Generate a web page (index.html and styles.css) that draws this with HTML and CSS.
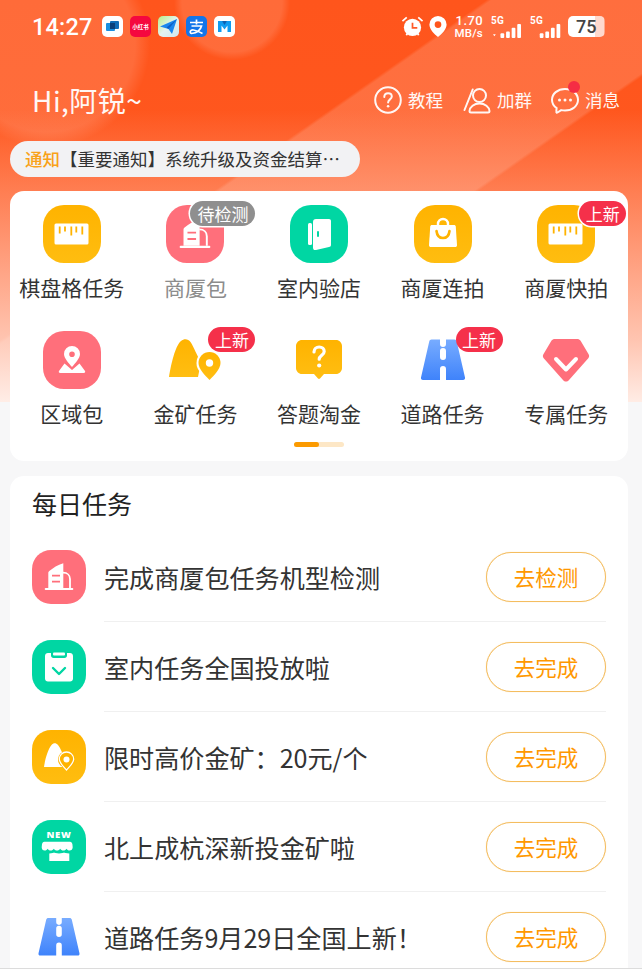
FILE: index.html
```html
<!DOCTYPE html>
<html lang="zh-CN">
<head>
<meta charset="utf-8">
<title>每日任务</title>
<link rel="stylesheet" href="styles.css">
</head>
<body>
<svg class="defs" width="0" height="0">
  <defs>
    <linearGradient id="gY" x1="0" y1="0" x2="0" y2="1"><stop offset="0" stop-color="#ffb300"/><stop offset="1" stop-color="#ffbe12"/></linearGradient>
    <linearGradient id="gB" x1="0" y1="0" x2="0" y2="1"><stop offset="0" stop-color="#78acff"/><stop offset="1" stop-color="#3f83fb"/></linearGradient>
    <symbol id="ruler" viewBox="0 0 58 58"><rect x="11.500" y="18.500" width="34" height="21" rx="1.500" fill="#fff"/><path d="M16.700 21.500v7M22 21.500v5M28.300 21.500v9M33.300 21.500v6M39.300 21.500v8" stroke="#ffb300" stroke-width="1.800" fill="none"/></symbol>
    <symbol id="building" viewBox="0 0 54 54"><path d="M13.700 38h26.600a1 1 0 0 1 0 2H13.700a1 1 0 0 1 0-2z" fill="#fff"/><path d="M16.300 38V23c0-1 .5-1.600 1.300-2.200 3.500-2.800 8-5.800 13.700-7.500V38z" fill="#fff"/><path d="M31 22.700c4.500 0 7 2.800 7 6.300v9" fill="none" stroke="#fff" stroke-width="1.800"/><path d="M20 25.700h8M20 31.700h8" stroke="#ff6f7b" stroke-width="1.800" fill="none"/></symbol>
    <symbol id="mine" viewBox="0 0 58 58"><path d="M3 46C5 34 9 15 15 10c3-2.500 7-2.500 9.500 1C28 16 31 25 35 31l-3 15z" fill="url(#gY)"/><circle cx="43.500" cy="32" r="13" fill="#fff"/><path d="M43.500 21a11 11 0 0 1 11 11c0 6-7 13-11 17-4-4-11-11-11-17a11 11 0 0 1 11-11z" fill="url(#gY)"/><circle cx="43.500" cy="32" r="3.700" fill="#fff"/></symbol>
    <symbol id="road" viewBox="0 0 58 58"><path fill-rule="evenodd" d="M17.500 8.500H26V13a3 3 0 0 0 6 0V8.500h8.500c1.100 0 1.900.7 2.200 1.800L51 46.500c.3 1.400-.5 2.500-2 2.500H32V38a3 3 0 0 0-6 0v11H9c-1.500 0-2.300-1.100-2-2.500l8.300-36.200c.3-1.100 1.100-1.800 2.200-1.800zM26 20v6a3 3 0 0 0 6 0v-6a3 3 0 0 0-6 0z" fill="url(#gB)"/></symbol>
  </defs>
</svg>

<main class="page">
  <div class="status">
    <span class="time">14:27</span>
    <div class="apps">
      <svg class="app" viewBox="0 0 21 21"><rect width="21" height="21" rx="5" fill="#fff"/><rect x="4" y="7" width="9" height="8" rx="1" fill="#1a8fe0"/><rect x="8" y="5" width="9" height="8" rx="1" fill="#0f6cb8"/><rect x="8" y="7" width="5" height="6" fill="#0a3f7a"/></svg>
      <svg class="app" viewBox="0 0 21 21"><rect width="21" height="21" rx="5" fill="#f5083f"/><text x="10.500" y="13" class="xhs">小红书</text></svg>
      <svg class="app" viewBox="0 0 21 21"><defs><linearGradient id="gM" x1="0" y1="0" x2="1" y2="1"><stop offset="0" stop-color="#b9ee86"/><stop offset=".5" stop-color="#e4f3ef"/><stop offset="1" stop-color="#cfe6ef"/></linearGradient></defs><rect width="21" height="21" rx="5" fill="url(#gM)"/><path d="M2 10.500 19 3l-5 15-3.500-5z" fill="#1a87ee"/><path d="M19 3 8.500 11.500 10.500 13z" fill="#0c5fc4"/></svg>
      <svg class="app" viewBox="0 0 21 21"><rect width="21" height="21" rx="5" fill="#1275ea"/><path d="M4 6.500h13M10.500 3.500v5M5.500 10h10c-1 4-5 7-10 7.500-2.500-1-1-4 2-3.500 3 .5 6 2 9 3.500" stroke="#fff" stroke-width="1.700" fill="none"/></svg>
      <svg class="app" viewBox="0 0 21 21"><rect width="21" height="21" rx="5" fill="#fff"/><path d="M4 5h4.500l2 3 2-3H17v11h-3.500V9.500l-3 4-3-4V16H4z" fill="#0f9bf0"/><path d="M8 5h5l-2.500 4z" fill="#0a5fb0"/></svg>
    </div>
    <div class="sys">
      <svg class="alarm" viewBox="0 0 24 24"><circle cx="12" cy="13" r="9" fill="#fff"/><path d="M12 8v5.500h5" stroke="#ff5a28" stroke-width="1.800" fill="none"/><path d="M1.500 6.500 6 2.500M22.500 6.500 18 2.500M5.500 21l1.500-2M18.500 21 17 19" stroke="#fff" stroke-width="1.800" fill="none"/></svg>
      <svg class="pin" viewBox="0 0 18 22"><path fill-rule="evenodd" d="M9 0a9 9 0 0 1 9 9c0 5-5 10-9 13-4-3-9-8-9-13a9 9 0 0 1 9-9zm0 5.500a3.500 3.500 0 1 0 0 7 3.500 3.500 0 0 0 0-7z" fill="#fff"/></svg>
      <span class="speed"><b>1.70</b><b>MB/s</b></span>
      <span class="sig sig-first"><b>5G</b><svg viewBox="0 0 32 15" class="bars"><path d="M1 11h3l-1.500 2z" fill="#fff"/><rect x="9" y="10" width="4" height="5" rx="1" fill="#fff"/><rect x="15" y="8" width="4" height="7" rx="1" fill="#fff"/><rect x="21" y="4" width="4" height="11" rx="1" fill="#fff"/><rect x="27" y="0" width="4" height="15" rx="1" fill="#fff"/></svg></span>
      <span class="sig"><b>5G</b><svg viewBox="0 0 24 15" class="bars bars-s"><rect x="1" y="10" width="4" height="5" rx="1" fill="#fff"/><rect x="7" y="8" width="4" height="7" rx="1" fill="#fff"/><rect x="13" y="4" width="4" height="11" rx="1" fill="#fff"/><rect x="19" y="0" width="4" height="15" rx="1" fill="#fff"/></svg></span>
      <span class="battery">75</span>
    </div>
  </div>

  <header class="head">
    <h1 class="hello">Hi,阿锐~</h1>
    <nav class="actions">
      <span class="action">
        <svg class="act-ic" viewBox="0 0 28 28"><circle cx="14" cy="14" r="12.800" fill="none" stroke="#fff" stroke-width="2"/><path d="M10.300 11c0-2.300 1.700-3.800 3.800-3.800s3.700 1.400 3.700 3.300c0 2.900-3.700 2.900-3.700 6" fill="none" stroke="#fff" stroke-width="2" stroke-linecap="round"/><circle cx="14.100" cy="20.300" r="1.300" fill="#fff"/></svg>
        教程
      </span>
      <span class="action">
        <svg class="act-ic" viewBox="0 0 28 28"><circle cx="16.500" cy="9.500" r="6.500" fill="none" stroke="#fff" stroke-width="2"/><path d="M9.700 3.500 1.500 24" fill="none" stroke="#fff" stroke-width="2" stroke-linecap="round"/><path d="M6.500 25c.3-4 4.500-7.500 10-7.500s9.700 3.500 10 7.500c0 1-.5 1.500-1.500 1.500H8c-1 0-1.500-.5-1.500-1.500z" fill="none" stroke="#fff" stroke-width="2" stroke-linejoin="round"/></svg>
        加群
      </span>
      <span class="action">
        <span class="msg-wrap">
          <svg class="act-ic act-msg" viewBox="0 0 30 28"><path d="M15 3c7.400 0 13 4.700 13 10.800S22.400 24.500 15 24.500c-1.300 0-2.600-.1-3.800-.4L7.500 26.500c-.7.400-1.300 0-1.200-.8l.3-3.600C3.800 20.200 2 17.200 2 13.800 2 7.700 7.600 3 15 3z" fill="none" stroke="#fff" stroke-width="2"/><circle cx="9.500" cy="14" r="1.500" fill="#fff"/><circle cx="15" cy="14" r="1.500" fill="#fff"/><circle cx="20.500" cy="14" r="1.500" fill="#fff"/></svg>
          <i class="dot"></i>
        </span>
        消息
      </span>
    </nav>
  </header>

  <div class="notice"><span class="notice-tag">通知</span><span class="notice-text">【重要通知】系统升级及资金结算…</span></div>

  <section class="grid-card">
    <div class="grid">
      <div class="item">
        <div class="ico sq yellow"><svg class="glyph"><use href="#ruler"/></svg></div>
        <span class="label">棋盘格任务</span>
      </div>
      <div class="item item-off">
        <div class="ico sq red"><svg class="glyph"><use href="#building"/></svg><span class="tag tag-grey">待检测</span></div>
        <span class="label">商厦包</span>
      </div>
      <div class="item">
        <div class="ico sq green">
          <svg class="glyph" viewBox="0 0 58 58"><rect x="18" y="18" width="4" height="22" rx="1.500" fill="#fff"/><path d="M23 17c0-2 1-3 3-3h13c1.200 0 2 .8 2 2v24c0 1.200-.8 2-2 2l-13 3c-2 .4-3-.6-3-2.500z" fill="#fff"/><rect x="27" y="26" width="2" height="6" rx="1" fill="#00d6a3"/></svg>
        </div>
        <span class="label">室内验店</span>
      </div>
      <div class="item">
        <div class="ico sq yellow">
          <svg class="glyph" viewBox="0 0 58 58"><path d="M24 21v-2a5 5 0 0 1 10 0v2" fill="none" stroke="#fff" stroke-width="2.400"/><path d="M18 20h22c1 0 1.700.7 1.800 1.700l1.200 18.500c0 1.100-.7 1.800-1.800 1.800H16.800c-1.100 0-1.800-.7-1.800-1.800l1.200-18.500c.1-1 .8-1.700 1.800-1.700z" fill="#fff"/><path d="M22.500 26c.5 4.500 3 7 6.500 7s6-2.500 6.500-7" fill="none" stroke="#ffb300" stroke-width="2.600" stroke-linecap="round"/></svg>
        </div>
        <span class="label">商厦连拍</span>
      </div>
      <div class="item">
        <div class="ico sq yellow"><svg class="glyph"><use href="#ruler"/></svg><span class="tag tag-red tag-ring">上新</span></div>
        <span class="label">商厦快拍</span>
      </div>

      <div class="item">
        <div class="ico sq red">
          <svg class="glyph" viewBox="0 0 58 58"><path fill-rule="evenodd" d="M29 15a8 8 0 0 1 8 8c0 4-4.500 9-8 13-3.500-4-8-9-8-13a8 8 0 0 1 8-8zm0 5.500a2.800 2.800 0 1 0 0 5.600 2.800 2.800 0 0 0 0-5.600z" fill="#fff"/><path d="M21.500 32.500 29 39l7.500-6.500L42 40c.6 1-.1 2-1.300 2H17.300c-1.200 0-1.900-1-1.300-2z" fill="#fff"/></svg>
        </div>
        <span class="label">区域包</span>
      </div>
      <div class="item">
        <div class="ico"><svg class="glyph"><use href="#mine"/></svg><span class="tag tag-red">上新</span></div>
        <span class="label">金矿任务</span>
      </div>
      <div class="item">
        <div class="ico">
          <svg class="glyph" viewBox="0 0 58 58"><path d="M12 9h34c3.300 0 6 2.700 6 6v22c0 3.300-2.700 6-6 6H34l-4 4.500c-.6.600-1.400.6-2 0L24 43H12c-3.300 0-6-2.700-6-6V15c0-3.300 2.700-6 6-6z" fill="url(#gY)"/><path d="M24 21c0-3 2.300-5 5.200-5 2.900 0 5 1.900 5 4.400 0 3.800-5 3.800-5 7.800" fill="none" stroke="#fff" stroke-width="3.200" stroke-linecap="round"/><circle cx="29.200" cy="34.500" r="2.100" fill="#fff"/></svg>
        </div>
        <span class="label">答题淘金</span>
      </div>
      <div class="item">
        <div class="ico"><svg class="glyph"><use href="#road"/></svg><span class="tag tag-red">上新</span></div>
        <span class="label">道路任务</span>
      </div>
      <div class="item">
        <div class="ico">
          <svg class="glyph" viewBox="0 0 58 58"><path d="M18 8h22c1.500 0 2.700.6 3.600 1.800l8 13.500c.8 1.300.7 2.800-.3 4L32 49c-1.700 2-4.300 2-6 0L6.700 27.300c-1-1.200-1.100-2.700-.3-4l8-13.500C15.300 8.600 16.500 8 18 8z" fill="#ff6f7b"/><path d="M19 28 29 38.500 39 28" fill="none" stroke="#fff" stroke-width="4" stroke-linecap="round" stroke-linejoin="round"/></svg>
        </div>
        <span class="label">专属任务</span>
      </div>
    </div>
    <div class="pager"><i class="pager-on"></i></div>
  </section>

  <section class="tasks">
    <h2 class="tasks-title">每日任务</h2>

    <div class="task">
      <div class="task-ico sq red"><svg class="glyph"><use href="#building"/></svg></div>
      <div class="task-body"><span class="task-text">完成商厦包任务机型检测</span><span class="btn">去检测</span></div>
    </div>
    <div class="task">
      <div class="task-ico sq green">
        <svg class="glyph" viewBox="0 0 54 54"><path d="M16 13h3v2.500c0 1.400 1 2.500 2.500 2.500h11c1.500 0 2.500-1.100 2.500-2.500V13h3c1.700 0 3 1.300 3 3v22.500c0 1.700-1.300 3-3 3H16c-1.700 0-3-1.300-3-3V16c0-1.700 1.300-3 3-3z" fill="#fff"/><rect x="21" y="12.500" width="12" height="3" rx="1" fill="#fff"/><path d="M21 28l6 6 6-6" fill="none" stroke="#00d6a3" stroke-width="2.400" stroke-linecap="round" stroke-linejoin="round"/></svg>
      </div>
      <div class="task-body"><span class="task-text">室内任务全国投放啦</span><span class="btn">去完成</span></div>
    </div>
    <div class="task">
      <div class="task-ico sq yellow">
        <svg class="glyph" viewBox="0 0 54 54"><path d="M12 37c1-7 3.500-17 7.500-22 2-2.300 4.500-2.300 6.500 0 2.500 3 4 8 6 11-3 3-3.500 7-1.500 11z" fill="#fff"/><circle cx="34.500" cy="29.500" r="8.500" fill="#ffb300"/><path d="M34.500 22a7.200 7.200 0 0 1 7.200 7.300c0 3.700-4.600 8-7.200 10.700-2.600-2.700-7.200-7-7.200-10.700a7.200 7.200 0 0 1 7.200-7.300z" fill="#ffb300" stroke="#fff" stroke-width="1.300"/><circle cx="34.500" cy="29.500" r="3" fill="#fff"/></svg>
      </div>
      <div class="task-body"><span class="task-text">限时高价金矿：20元/个</span><span class="btn">去完成</span></div>
    </div>
    <div class="task">
      <div class="task-ico sq green">
        <svg class="glyph" viewBox="0 0 54 54"><text x="27" y="17.500" class="new-text">NEW</text><path d="M16 21.700h22c1.500 0 2 1 2.400 2.500l.3 3c0 2-1.400 3.300-3.100 3.300-1.500 0-2.400-.7-3-1.800-.7 1.100-1.800 1.800-3.200 1.800-1.500 0-2.500-.7-3.200-1.800-.7 1.100-1.800 1.800-3.200 1.800s-2.500-.7-3.200-1.800c-.7 1.100-1.700 1.800-3.200 1.800-1.300 0-2.300-.7-3-1.800-.6 1.100-1.500 1.800-3 1.800-1.700 0-2.900-1.300-2.900-3.300l.3-3c.4-1.500.9-2.500 2.400-2.500z" fill="#fff"/><path d="M17.300 33.500c2.500 0 4.700-1 4.700-1s2.500 1 5 1 5-1 5-1 2.500 1 5.300 1V41H17.300z" fill="#fff"/></svg>
      </div>
      <div class="task-body"><span class="task-text">北上成杭深新投金矿啦</span><span class="btn">去完成</span></div>
    </div>
    <div class="task task-last">
      <div class="task-ico"><svg class="glyph"><use href="#road"/></svg></div>
      <div class="task-body"><span class="task-text">道路任务9月29日全国上新！</span><span class="btn">去完成</span></div>
    </div>
  </section>
</main>
</body>
</html>
```

FILE: styles.css
```css
* { box-sizing: border-box; }
html, body { margin: 0; padding: 0; }
body {
  width: 642px;
  height: 969px;
  overflow: hidden;
  font-family: "Noto Sans CJK SC", "Noto Sans", sans-serif;
  color: #333;
}
.defs { display: block; height: 0; }

.page {
  width: 642px;
  height: 969px;
  overflow: hidden;
  border-bottom: 1px solid #dcdcdc;
  background-color: #f7f7f8;
  background-image:
    linear-gradient(to bottom, rgba(255,255,255,0) 110px, rgba(255,238,232,.72) 340px, rgba(255,242,237,.96) 402px),
    radial-gradient(circle at 232px 2px, rgba(255,255,255,.13) 50px, rgba(255,255,255,0) 58px),
    radial-gradient(circle at 47px 44px, rgba(255,255,255,.13) 88px, rgba(255,255,255,0) 103px),
    linear-gradient(145deg, rgba(255,255,255,0) 279px, rgba(255,255,255,.15) 282px, rgba(255,255,255,.15) 428px, rgba(255,255,255,0) 431px),
    linear-gradient(#ff551c, #ff5a22);
  background-size: 642px 402px;
  background-repeat: no-repeat;
}

/* status bar */
.status {
  height: 53px;
  display: flex;
  align-items: center;
  padding: 0 37px 0 32px;
  color: #fff;
}
.time { font-family: Roboto, sans-serif; font-weight: 500; font-size: 23.500px; width: 70px; letter-spacing: .2px; }
.apps { display: flex; gap: 7px; }
.app { width: 21px; height: 21px; display: block; }
.xhs { font-family: "Noto Sans CJK SC", sans-serif; font-size: 5.500px; font-weight: 700; fill: #fff; text-anchor: middle; }
.sys { margin-left: auto; display: flex; align-items: center; }
.alarm { width: 23px; height: 23px; display: block; }
.pin { width: 18px; height: 21px; margin-left: 5px; display: block; }
.speed { display: flex; flex-direction: column; align-items: flex-end; margin-left: 7px; width: 29px; font-family: Roboto, sans-serif; }
.speed b { font-size: 13px; line-height: 12px; font-weight: 500; white-space: nowrap; letter-spacing: .4px; }
.speed b + b { font-size: 11.500px; letter-spacing: .2px; }
.sig { display: flex; flex-direction: column; font-family: Roboto, sans-serif; margin-left: 8px; position: relative; width: 32px; height: 22px; }
.sig b { font-size: 10px; line-height: 10px; font-weight: 700; letter-spacing: .2px; }
.sig + .sig { margin-left: 7px; width: 32px; }
.bars { width: 32px; height: 15px; display: block; margin-top: -2px; margin-left: 0; }
.bars-s { width: 24px; margin-left: 8px; }
.battery {
  margin-left: 6px;
  width: 37px;
  height: 21px;
  border-radius: 5px;
  background: linear-gradient(to right, #fff 72%, #ffd9cd 72%, #ffd9cd 96%, rgba(255,255,255,.4) 96%);
  color: #444;
  font-family: Roboto, sans-serif;
  font-weight: 500;
  font-size: 18px;
  line-height: 21px;
  padding-left: 8px;
}

/* header */
.head {
  margin-top: 27px;
  height: 40px;
  padding: 0 22px 0 32px;
  display: flex;
  align-items: center;
  justify-content: space-between;
  color: #fff;
}
.hello { margin: 0; font-size: 28px; font-weight: 400; line-height: 40px; opacity: .95; letter-spacing: .5px; }
.actions { display: flex; gap: 20px; }
.action { display: flex; align-items: center; gap: 6px; font-size: 17.500px; line-height: 30px; opacity: .95; }
.act-ic { width: 28px; height: 28px; display: block; }
.act-msg { width: 30px; }
.msg-wrap { position: relative; display: block; margin-left: -2px; margin-right: -1px; }
.dot { position: absolute; right: 0; top: -5px; width: 12px; height: 12px; border-radius: 50%; background: #f52a45; }

/* notice */
.notice {
  margin: 21px 0 0 10px;
  width: 350px;
  height: 36px;
  border-radius: 18px;
  background: #f2f2f4;
  padding-left: 15px;
  font-size: 17.500px;
  line-height: 36px;
  white-space: nowrap;
}
.notice-tag { color: #f9a21a; font-weight: 500; }
.notice-text { color: #333; }

/* grid card */
.grid-card {
  margin: 14px 14px 0 10px;
  height: 270px;
  border-radius: 14px;
  background: #fff;
  padding-top: 14px;
}
.grid { display: grid; grid-template-columns: repeat(5, 1fr); row-gap: 27px; }
.item { display: flex; flex-direction: column; align-items: center; }
.ico { position: relative; width: 58px; height: 58px; }
.sq { border-radius: 21px; }
.yellow { background: linear-gradient(#ffb300, #ffbd10); }
.red { background: #ff6f7b; }
.green { background: #00d6a3; }
.glyph { width: 100%; height: 100%; display: block; }
.label { margin-top: 9px; padding-bottom: 2px; font-size: 21px; line-height: 30px; color: #333; white-space: nowrap; }
.item-off .label { color: #8c8c8c; }
.tag {
  position: absolute;
  height: 25px;
  border-radius: 13px;
  color: #fff;
  font-size: 17px;
  line-height: 25px;
  text-align: center;
  white-space: nowrap;
  top: -4px;
}
.tag-grey { left: 24px; width: 65px; background: #8f8f8f; box-shadow: 0 0 0 1.500px #fff; }
.tag-red { left: 42px; width: 47px; background: #f5304a; }
.tag-ring { box-shadow: 0 0 0 1.500px #fff; }
.pager { width: 50px; height: 5px; border-radius: 3px; margin: 12px 0 0 284px; background: #fde7c6; }
.pager-on { display: block; width: 25px; height: 5px; border-radius: 3px; background: #fb9a00; }

/* tasks */
.tasks {
  margin: 15px 14px 0 10px;
  height: 493px;
  border-radius: 14px 14px 0 0;
  background: #fff;
  padding: 12px 22px 0;
}
.tasks-title { margin: 0 0 14px; font-size: 25px; font-weight: 400; line-height: 30px; color: #222; }
.task { height: 90px; display: flex; align-items: center; }
.task-ico { flex: none; width: 54px; height: 54px; }
.task-ico.sq { border-radius: 19px; }
.task-body {
  flex: 1;
  align-self: stretch;
  margin-left: 18px;
  display: flex;
  align-items: center;
  justify-content: space-between;
  border-bottom: 1px solid #f0f0f0;
}
.task-last .task-body { border-bottom: 0; }
.task-text { font-size: 25.100px; line-height: 34px; color: #333; white-space: nowrap; }
.btn {
  flex: none;
  width: 120px;
  height: 50px;
  border: 1px solid #f4bd60;
  box-shadow: 0 0 1px #f7d59a;
  border-radius: 25px;
  color: #ff9800;
  font-size: 21.500px;
  line-height: 47px;
  text-align: center;
  background: #fff;
}
.new-text { font-family: "Open Sans", sans-serif; font-weight: 800; font-size: 9.500px; fill: #fff; text-anchor: middle; letter-spacing: .6px; }
```
